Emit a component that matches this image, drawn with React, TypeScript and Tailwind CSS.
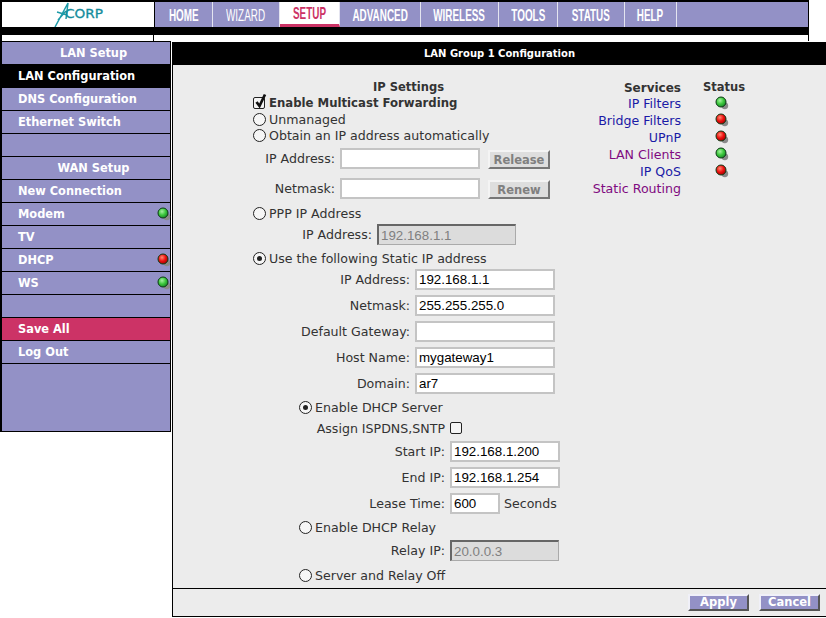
const tabs = [
  { name: 'HOME', w: 'w-[58px]' },
  { name: 'WIZARD', w: 'w-[67px]', thin: true },
  { name: 'SETUP', w: 'w-[60px]', active: true },
  { name: 'ADVANCED', w: 'w-[81px]' },
  { name: 'WIRELESS', w: 'w-[78px]' },
  { name: 'TOOLS', w: 'w-[59px]' },
  { name: 'STATUS', w: 'w-[67px]' },
  { name: 'HELP', w: 'w-[52px]' },
];

const Led = ({ color }: { color: 'green' | 'red' }) => {
  const id = `led-${color}`;
  return (
    <svg width="14" height="14" viewBox="0 0 14 14" className="shrink-0">
      <defs>
        <radialGradient id={id} cx="0.4" cy="0.35" r="0.65">
          <stop offset="0" stopColor={color === 'green' ? '#a6f0a0' : '#ff8a70'} />
          <stop offset="0.55" stopColor={color === 'green' ? '#3cc83c' : '#ee1111'} />
          <stop offset="1" stopColor={color === 'green' ? '#1c8a2a' : '#aa0000'} />
        </radialGradient>
      </defs>
      <circle cx="9.8" cy="9.8" r="3.4" fill="#8a8a8a" />
      <circle cx="6" cy="6" r="5" fill={`url(#${id})`} stroke="#0c3a14" strokeWidth="1" />
    </svg>
  );
};

const Logo = () => (
  <svg width="52" height="25" viewBox="0 0 52 25">
    <path d="M3 25 L16 1 L14 17 M5 10 L15 13 M6 18 L14 9" fill="none" stroke="#1d9aa8" strokeWidth="1.5" />
    <text x="13" y="16" textLength="38" lengthAdjust="spacingAndGlyphs" fontSize="12" fill="#138c9c" stroke="#138c9c" strokeWidth="0.3" fontFamily="'DejaVu Sans', sans-serif">CORP</text>
  </svg>
);

const Radio = ({ on }: { on?: boolean }) => (
  <span className="flex h-[13px] w-[13px] shrink-0 items-center justify-center rounded-full border border-[#222] bg-[#f6f6f6]">
    {on && <span className="h-[5px] w-[5px] rounded-full bg-[#222]" />}
  </span>
);

const Check = ({ on }: { on?: boolean }) => (
  <span className="relative h-[12px] w-[12px] shrink-0 rounded-[2px] border border-[#222] bg-[#f4f4f4]">
    {on && (
      <svg width="14" height="16" viewBox="0 0 14 16" className="absolute -top-[5px] left-0">
        <path d="M2.5 9 L5.5 13 L11 1.5" fill="none" stroke="#111" strokeWidth="2.7" />
      </svg>
    )}
  </span>
);

const Choice = ({ on, indent, mt, children }: { on?: boolean; indent?: boolean; mt: string; children: string }) => (
  <div className={`flex h-4 items-center gap-[3px] ${indent ? 'ml-[46px]' : ''} ${mt}`}>
    <Radio on={on} />
    <span className="pt-[2px]">{children}</span>
  </div>
);

const Field = ({
  label,
  labelW,
  value = '',
  inputW,
  disabled,
  mt = 'mt-[5px]',
  children,
}: {
  label: string;
  labelW: string;
  value?: string;
  inputW: string;
  disabled?: boolean;
  mt?: string;
  children?: React.ReactNode;
}) => (
  <div className={`flex h-[21px] items-center ${mt}`}>
    <span className={`shrink-0 whitespace-nowrap pt-[1px] text-right ${labelW}`}>{label}</span>
    <input
      readOnly
      value={value}
      className={`ml-[5px] h-[21px] shrink-0 px-[2px] font-[Liberation_Sans,sans-serif] text-[13.33px] outline-none ${inputW} ${
        disabled
          ? 'border border-[#aaa] border-l-2 border-t-2 border-l-[#666] border-t-[#666] bg-[#dcdcdc] text-[#808080]'
          : 'border-2 border-[#c4c4c4] bg-white text-black'
      }`}
    />
    {children}
  </div>
);

const GrayButton = ({ children }: { children: string }) => (
  <button className="mt-[2px] ml-[8px] h-[19px] w-[62px] border-2 border-[#f4f4f4] border-r-[#777] border-b-[#777] bg-[#dedede] text-[11.5px] font-bold text-[#808080]">
    {children}
  </button>
);

const NavButton = ({ children }: { children: string }) => (
  <button className="h-[17px] w-[61px] border-2 border-[#f0f0f8] border-r-[#555] border-b-[#555] bg-[#9391c6] text-[11.5px] leading-none font-bold text-white">
    {children}
  </button>
);

const SideItem = ({
  children,
  center,
  active,
  save,
  led,
}: {
  children?: string;
  center?: boolean;
  active?: boolean;
  save?: boolean;
  led?: 'green' | 'red';
}) => (
  <div
    className={`flex h-[23px] shrink-0 items-center border-b border-black pl-[16px] pr-[1px] text-[11.4px] font-bold text-white ${
      active ? 'bg-black' : save ? 'bg-[#cc3366]' : 'bg-[#9391c6]'
    } ${center ? 'justify-center pl-0' : 'justify-between'}`}
  >
    <span className="pt-[1px]">{children}</span>
    {led && (
      <span className="-mr-[2px] flex">
        <Led color={led} />
      </span>
    )}
  </div>
);

const services = [
  { name: 'IP Filters', color: 'text-[#1a1aa6]', led: 'green' as const },
  { name: 'Bridge Filters', color: 'text-[#1a1aa6]', led: 'red' as const },
  { name: 'UPnP', color: 'text-[#1a1aa6]', led: 'red' as const },
  { name: 'LAN Clients', color: 'text-[#800a80]', led: 'green' as const },
  { name: 'IP QoS', color: 'text-[#1a1aa6]', led: 'red' as const },
  { name: 'Static Routing', color: 'text-[#800a80]' },
];

export default function App() {
  return (
    <div className="h-[618px] w-[826px] overflow-hidden bg-white font-[DejaVu_Sans,sans-serif] text-[12.6px] text-[#333]">
      {/* top nav */}
      <div className="w-[809px] bg-black pt-[2px] pl-[2px]">
        <div className="flex h-[25px]">
          <div className="flex w-[152px] items-center justify-center bg-white">
            <Logo />
          </div>
          <div className="ml-[1px] flex flex-1 bg-[#9391c6]">
            {tabs.map((t) => (
              <div
                key={t.name}
                className={`flex items-center justify-center border-r border-[#e4e4f0] ${t.w} ${
                  t.active ? 'border-b-[3px] border-b-[#cc3366] bg-white text-[#cc3366]' : 'text-white'
                }`}
              >
                <span
                  className={`scale-x-[0.6] pt-[1px] font-[Liberation_Sans,sans-serif] text-[16.5px] whitespace-nowrap ${
                    t.thin ? 'font-normal' : 'font-bold'
                  }`}
                >
                  {t.name}
                </span>
              </div>
            ))}
          </div>
          <div className="w-[1px] bg-black" />
        </div>
        <div className="h-[8px]" />
        <div className="flex h-[6px] w-[806px]">
          <div className="w-[152px] border-r border-black bg-white" />
          <div className="flex-1 bg-white" />
        </div>
      </div>

      <div className="flex">
        {/* sidebar */}
        <div className="flex h-[391px] w-[171px] shrink-0 flex-col border-t border-r border-b border-l-2 border-black bg-[#9391c6]">
          <SideItem center>LAN Setup</SideItem>
          <SideItem active>LAN Configuration</SideItem>
          <SideItem>DNS Configuration</SideItem>
          <SideItem>Ethernet Switch</SideItem>
          <SideItem />
          <SideItem center>WAN Setup</SideItem>
          <SideItem>New Connection</SideItem>
          <SideItem led="green">Modem</SideItem>
          <SideItem>TV</SideItem>
          <SideItem led="red">DHCP</SideItem>
          <SideItem led="green">WS</SideItem>
          <SideItem />
          <SideItem save>Save All</SideItem>
          <SideItem>Log Out</SideItem>
        </div>

        {/* main panel */}
        <div className="mt-[1px] ml-[1px] flex h-[575px] flex-1 flex-col border-l border-black bg-[#ececec]">
          <div className="flex h-[23px] items-center justify-center bg-black text-[10px] font-bold text-white">
            LAN Group 1 Configuration
          </div>
          <div className="flex h-[524px] border-b border-black">
            <div className="w-[408px] pt-[15px] pl-[80px]">
              <div className="h-[15px] pl-[120px] text-[11.5px] leading-[15px] font-bold">IP Settings</div>
              <div className="flex h-[15px] items-center gap-[4px] text-[11.7px] font-bold">
                <Check on />
                <span className="pt-[2px]">Enable Multicast Forwarding</span>
              </div>
              <Choice mt="mt-[1px]">Unmanaged</Choice>
              <Choice mt="">Obtain an IP address automatically</Choice>
              <Field label="IP Address:" labelW="w-[82px]" inputW="w-[140px]">
                <GrayButton>Release</GrayButton>
              </Field>
              <Field label="Netmask:" labelW="w-[82px]" inputW="w-[140px]" mt="mt-[9px]">
                <GrayButton>Renew</GrayButton>
              </Field>
              <Choice mt="mt-[6px]">PPP IP Address</Choice>
              <Field label="IP Address:" labelW="w-[119px]" inputW="w-[139px]" value="192.168.1.1" disabled mt="mt-[3px]" />
              <Choice on mt="mt-[5px]">Use the following Static IP address</Choice>
              <Field label="IP Address:" labelW="w-[157px]" inputW="w-[140px]" value="192.168.1.1" mt="mt-[3px]" />
              <Field label="Netmask:" labelW="w-[157px]" inputW="w-[140px]" value="255.255.255.0" />
              <Field label="Default Gateway:" labelW="w-[157px]" inputW="w-[140px]" />
              <Field label="Host Name:" labelW="w-[157px]" inputW="w-[140px]" value="mygateway1" />
              <Field label="Domain:" labelW="w-[157px]" inputW="w-[140px]" value="ar7" />
              <Choice on indent mt="mt-[5px]">Enable DHCP Server</Choice>
              <div className="mt-[5px] flex h-4 w-[209px] items-center justify-end gap-[5px]">
                <span className="pt-[2px]">Assign ISPDNS,SNTP</span>
                <Check />
              </div>
              <Field label="Start IP:" labelW="w-[192px]" inputW="w-[110px]" value="192.168.1.200" />
              <Field label="End IP:" labelW="w-[192px]" inputW="w-[110px]" value="192.168.1.254" />
              <Field label="Lease Time:" labelW="w-[192px]" inputW="w-[50px]" value="600">
                <span className="ml-[4px] pt-[1px]">Seconds</span>
              </Field>
              <Choice indent mt="mt-[5px]">Enable DHCP Relay</Choice>
              <Field label="Relay IP:" labelW="w-[192px]" inputW="w-[109px]" value="20.0.0.3" disabled />
              <Choice indent mt="mt-[6px]">Server and Relay Off</Choice>
            </div>

            {/* services list */}
            <div className="pt-[14px]">
              <div className="flex h-[17px] items-center text-[11.5px] font-bold">
                <span className="w-[100px] text-right text-[12px]">Services</span>
                <span className="ml-[22px]">Status</span>
              </div>
              {services.map((s) => (
                <div key={s.name} className="flex h-[17px] items-center">
                  <span className={`w-[100px] whitespace-nowrap text-right ${s.color}`}>{s.name}</span>
                  {s.led && (
                    <span className="mb-[3px] ml-[34px] flex">
                      <Led color={s.led} />
                    </span>
                  )}
                </div>
              ))}
            </div>
          </div>
          <div className="flex h-[28px] items-center justify-end gap-[10px] border-b border-black pr-[6px]">
            <NavButton>Apply</NavButton>
            <NavButton>Cancel</NavButton>
          </div>
        </div>
      </div>
    </div>
  );
}
